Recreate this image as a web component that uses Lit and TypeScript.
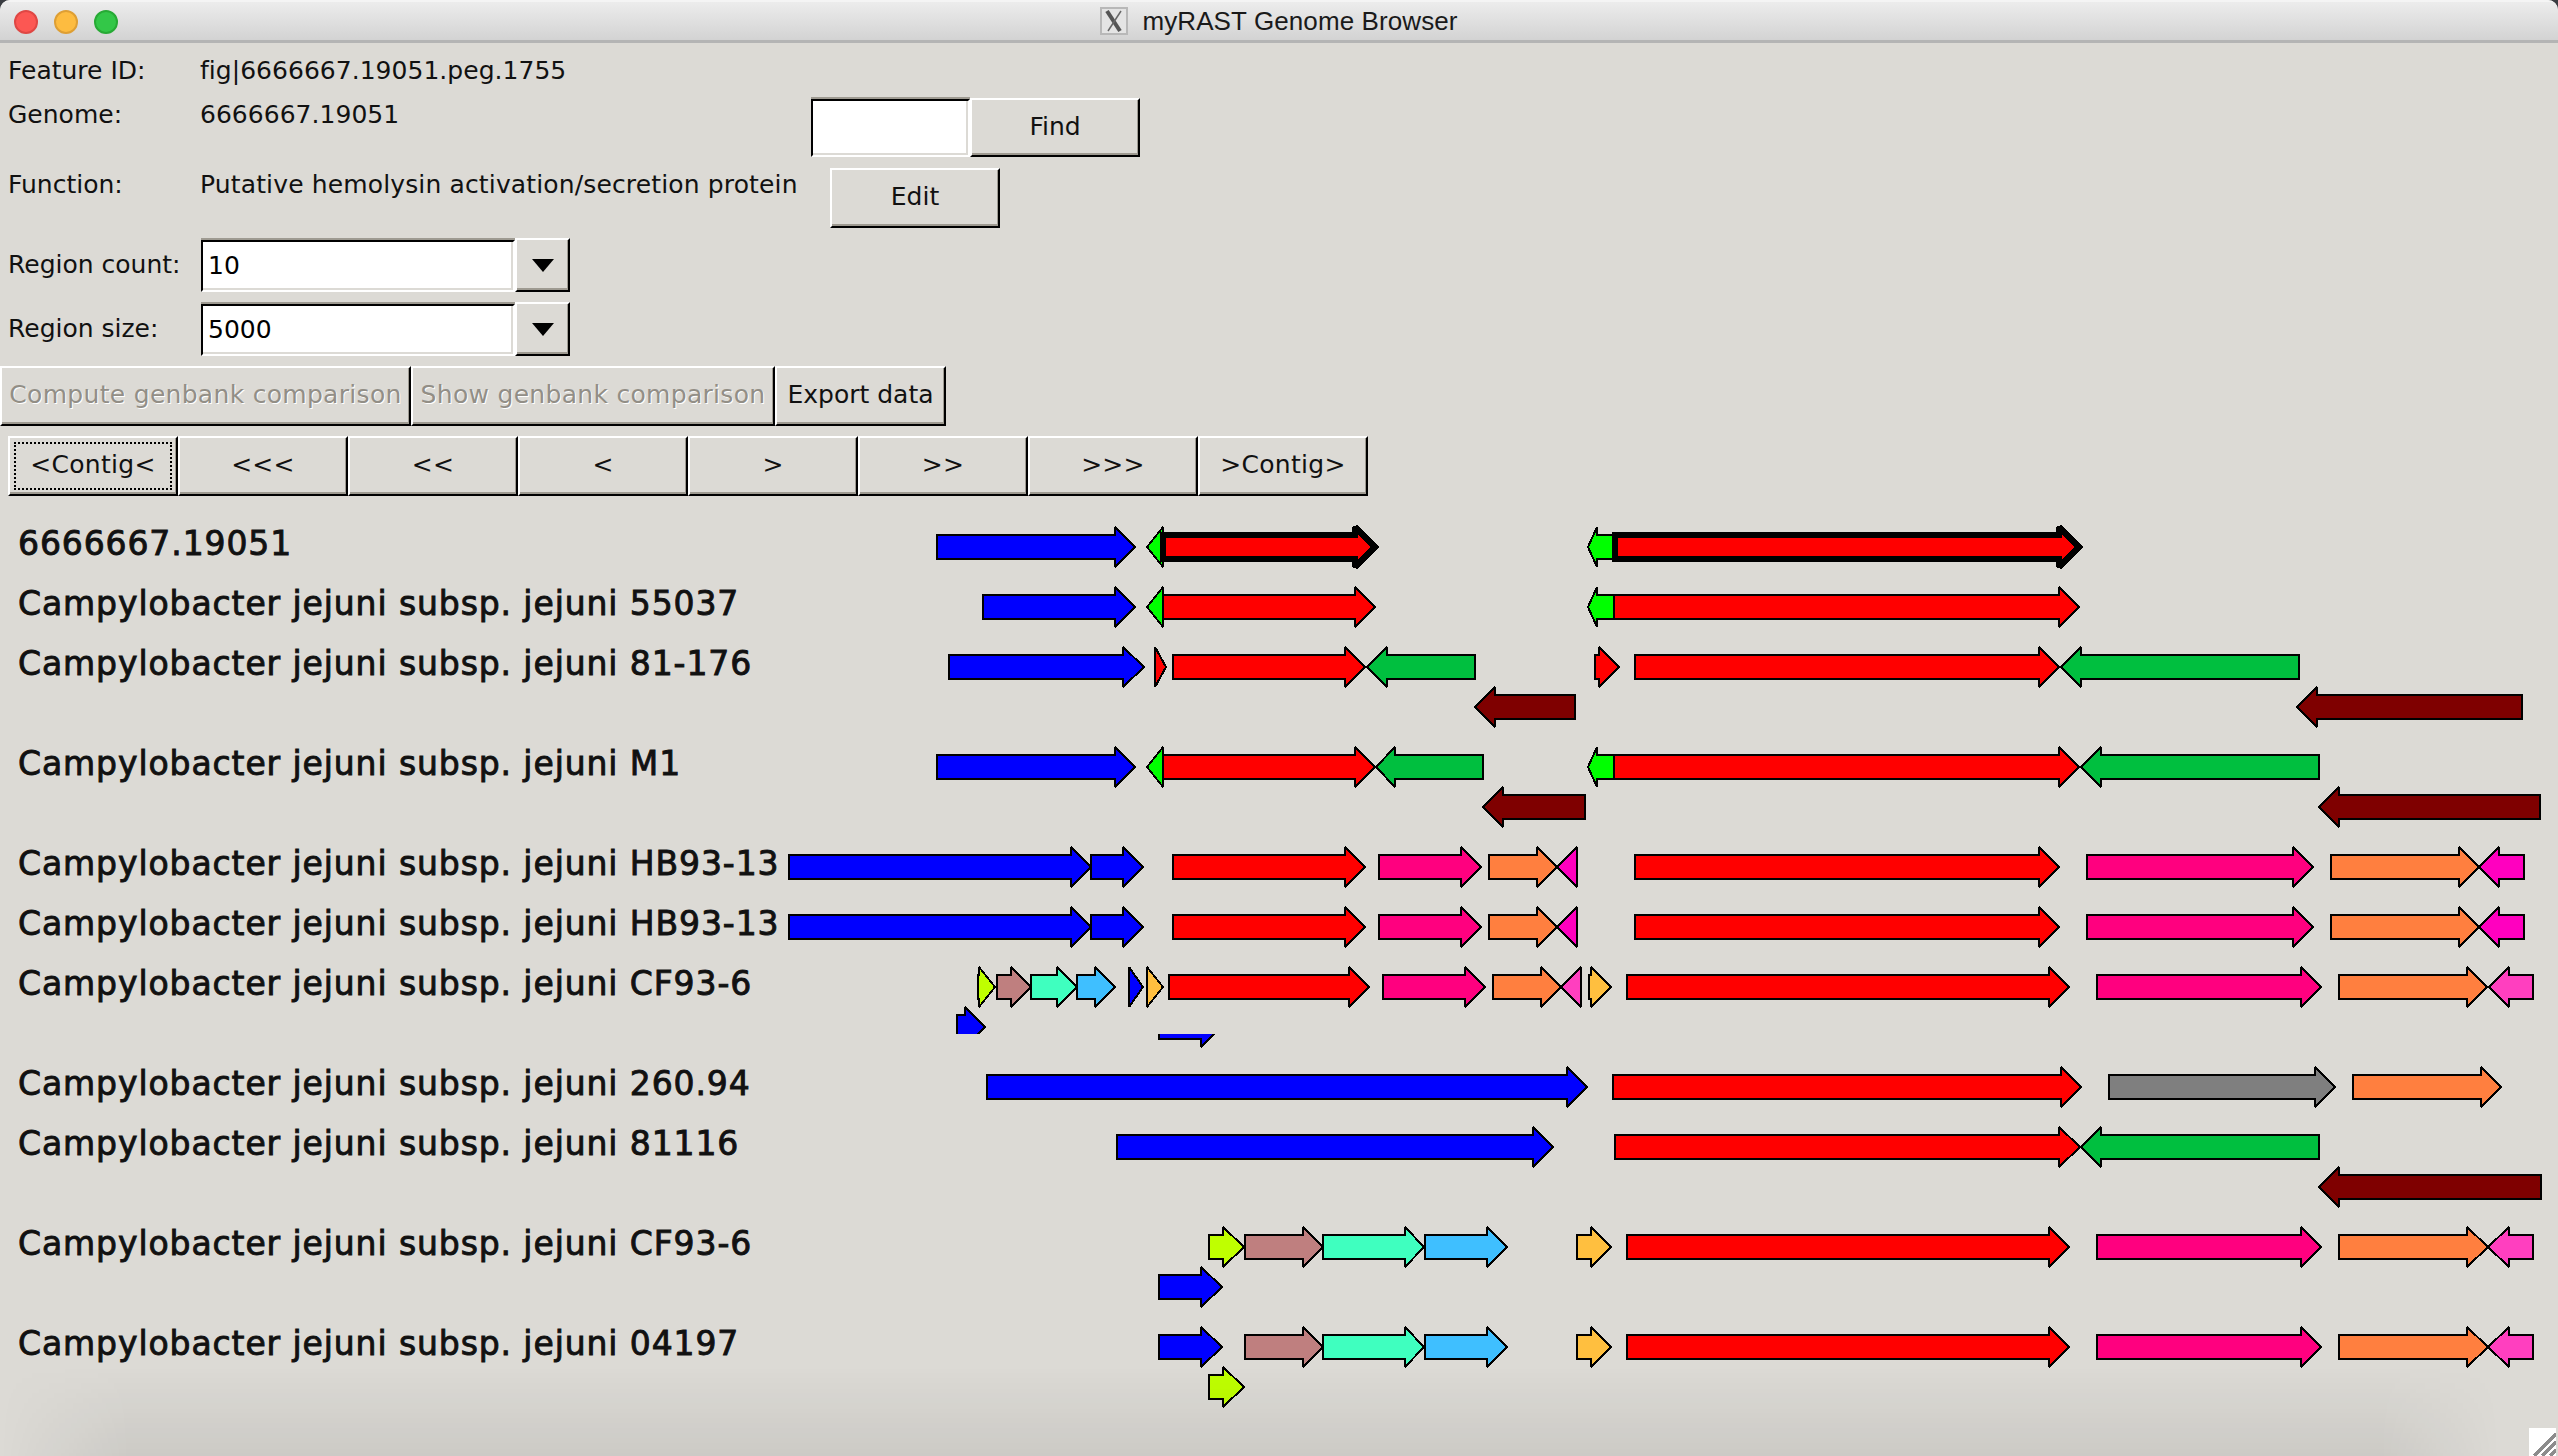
import { LitElement, html, svg, css, TemplateResult } from "lit";
import { customElement } from "lit/decorators.js";

const BLUE = "#0000ff";
const RED = "#ff0000";
const LIME = "#00ff00";
const GREEN = "#00bf3f";
const MAROON = "#7f0000";
const PINK = "#ff007f";
const ORANGE = "#ff7f3f";
const MAGENTA = "#ff00bf";
const ROSE = "#ff3fbf";
const GOLD = "#ffbf3f";
const YELLOW = "#bfff00";
const BROWN = "#bf7f7f";
const AQUA = "#3fffbf";
const SKY = "#3fbfff";
const GRAY = "#7f7f7f";

// [center y, tail x, head base x, tip x, colour, stroke width?, clip?]
// tip < tail means the gene points left
type Gene = [number, number, number, number, string, number?, string?];

const GENES: Gene[] = [
  [547, 937, 1115, 1135, BLUE],
  [547, 1163, 1163, 1147, LIME],
  [547, 1163, 1355, 1375, RED, 6],
  [547, 1614, 1597, 1588, LIME],
  [547, 1615, 2059, 2079, RED, 6],

  [607, 983, 1115, 1135, BLUE],
  [607, 1163, 1163, 1147, LIME],
  [607, 1163, 1355, 1375, RED],
  [607, 1614, 1597, 1588, LIME],
  [607, 1614, 2059, 2079, RED],

  [667, 949, 1123, 1144, BLUE],
  [667, 1155, 1155, 1166, RED],
  [667, 1173, 1345, 1365, RED],
  [667, 1475, 1387, 1367, GREEN],
  [667, 1595, 1599, 1619, RED],
  [667, 1635, 2039, 2059, RED],
  [667, 2299, 2081, 2061, GREEN],
  [707, 1575, 1495, 1475, MAROON],
  [707, 2522, 2317, 2297, MAROON],

  [767, 937, 1115, 1135, BLUE],
  [767, 1163, 1163, 1147, LIME],
  [767, 1163, 1355, 1375, RED],
  [767, 1483, 1395, 1376, GREEN],
  [767, 1614, 1597, 1588, LIME],
  [767, 1614, 2059, 2079, RED],
  [767, 2319, 2101, 2081, GREEN],
  [807, 1585, 1503, 1483, MAROON],
  [807, 2540, 2339, 2319, MAROON],

  ...[867, 927].flatMap((y): Gene[] => [
    [y, 789, 1071, 1091, BLUE],
    [y, 1091, 1123, 1143, BLUE],
    [y, 1173, 1345, 1365, RED],
    [y, 1379, 1461, 1481, PINK],
    [y, 1489, 1537, 1557, ORANGE],
    [y, 1577, 1577, 1557, MAGENTA],
    [y, 1635, 2039, 2059, RED],
    [y, 2087, 2293, 2313, PINK],
    [y, 2331, 2459, 2479, ORANGE],
    [y, 2524, 2499, 2479, MAGENTA],
  ]),

  [987, 978, 979, 995, YELLOW],
  [987, 997, 1011, 1031, BROWN],
  [987, 1031, 1057, 1077, AQUA],
  [987, 1077, 1095, 1115, SKY],
  [987, 1129, 1129, 1143, BLUE],
  [987, 1147, 1147, 1163, GOLD],
  [987, 1169, 1349, 1369, RED],
  [987, 1383, 1465, 1485, PINK],
  [987, 1493, 1541, 1561, ORANGE],
  [987, 1581, 1581, 1561, ROSE],
  [987, 1589, 1591, 1611, GOLD],
  [987, 1627, 2049, 2069, RED],
  [987, 2097, 2301, 2321, PINK],
  [987, 2339, 2467, 2487, ORANGE],
  [987, 2533, 2509, 2489, ROSE],
  [1027, 957, 965, 985, BLUE, 2, "above"],
  [1027, 1159, 1201, 1221, BLUE, 2, "below"],

  [1087, 987, 1567, 1587, BLUE],
  [1087, 1613, 2061, 2081, RED],
  [1087, 2109, 2315, 2335, GRAY],
  [1087, 2353, 2481, 2501, ORANGE],

  [1147, 1117, 1533, 1553, BLUE],
  [1147, 1615, 2059, 2080, RED],
  [1147, 2319, 2101, 2081, GREEN],
  [1187, 2541, 2339, 2319, MAROON],

  ...[1247, 1347].flatMap((y): Gene[] => [
    [y, 1245, 1303, 1323, BROWN],
    [y, 1323, 1405, 1424, AQUA],
    [y, 1425, 1487, 1507, SKY],
    [y, 1577, 1591, 1611, GOLD],
    [y, 1627, 2049, 2069, RED],
    [y, 2097, 2301, 2321, PINK],
    [y, 2339, 2467, 2488, ORANGE],
    [y, 2533, 2509, 2488, ROSE],
  ]),
  [1247, 1209, 1223, 1244, YELLOW],
  [1287, 1159, 1201, 1222, BLUE],
  [1347, 1159, 1201, 1222, BLUE],
  [1387, 1209, 1223, 1244, YELLOW],
];

const LABELS: [number, string][] = [
  [547, "6666667.19051"],
  [607, "Campylobacter jejuni subsp. jejuni 55037"],
  [667, "Campylobacter jejuni subsp. jejuni 81-176"],
  [767, "Campylobacter jejuni subsp. jejuni M1"],
  [867, "Campylobacter jejuni subsp. jejuni HB93-13"],
  [927, "Campylobacter jejuni subsp. jejuni HB93-13"],
  [987, "Campylobacter jejuni subsp. jejuni CF93-6"],
  [1087, "Campylobacter jejuni subsp. jejuni 260.94"],
  [1147, "Campylobacter jejuni subsp. jejuni 81116"],
  [1247, "Campylobacter jejuni subsp. jejuni CF93-6"],
  [1347, "Campylobacter jejuni subsp. jejuni 04197"],
];

const NAV = ["<Contig<", "<<<", "<<", "<", ">", ">>", ">>>", ">Contig>"];

function genePoints(y: number, tail: number, base: number, tip: number): string {
  return [
    [tail, y - 12],
    [base, y - 12],
    [base, y - 20],
    [tip, y],
    [base, y + 20],
    [base, y + 12],
    [tail, y + 12],
  ]
    .map((c) => c.join(","))
    .join(" ");
}

@customElement("app-root")
export class AppRoot extends LitElement {
  private combo(value: string): TemplateResult {
    return html`
      <div class="entry combo-entry">${value}</div>
      <div class="btn drop">
        <svg width="22" height="13" viewBox="0 0 22 13">
          <polygon points="0,0 22,0 11,13" fill="#000"></polygon>
        </svg>
      </div>
    `;
  }

  private canvas(): TemplateResult {
    return html`
      <svg class="canvas" width="2558" height="960" viewBox="0 496 2558 960">
        <defs>
          <clipPath id="above"><rect x="900" y="980" width="200" height="54"></rect></clipPath>
          <clipPath id="below"><rect x="1100" y="1034" width="200" height="40"></rect></clipPath>
        </defs>
        ${LABELS.map(
          ([y, text]) => svg`<text class="label" x="18" y=${y + 8}>${text}</text>`
        )}
        ${GENES.map(
          ([y, tail, base, tip, color, width, clip]) => svg`
            <polygon
              points=${genePoints(y, tail, base, tip)}
              fill=${color}
              stroke="#000"
              stroke-width=${width ?? 2}
              stroke-miterlimit="2.4"
              shape-rendering="crispEdges"
              clip-path=${clip ? `url(#${clip})` : "none"}
            ></polygon>`
        )}
      </svg>
    `;
  }

  public render(): TemplateResult {
    return html`
      <div class="window">
        <header class="titlebar">
          <div class="lights">
            <span class="light close"></span>
            <span class="light min"></span>
            <span class="light max"></span>
          </div>
          <div class="title">
            <svg width="28" height="28" viewBox="0 0 28 28">
              <rect x="1" y="1" width="26" height="26" fill="#e4e4e4" stroke="#b8b8b8" stroke-width="2"></rect>
              <path d="M7 4 L20 24" stroke="#555" stroke-width="4" fill="none"></path>
              <path d="M21 4 L8 24" stroke="#666" stroke-width="1.5" fill="none"></path>
            </svg>
            <span>myRAST Genome Browser</span>
          </div>
        </header>

        <div class="row row-feature">
          <span class="key">Feature ID:</span>
          <span class="value">fig|6666667.19051.peg.1755</span>
        </div>
        <div class="row row-genome">
          <span class="key">Genome:</span>
          <span class="value genome-value">6666667.19051</span>
          <div class="entry find-entry"></div>
          <div class="btn find">Find</div>
        </div>
        <div class="row row-function">
          <span class="key">Function:</span>
          <span class="value function-value">Putative hemolysin activation/secretion protein</span>
          <div class="btn edit">Edit</div>
        </div>
        <div class="row row-combo">
          <span class="key">Region count:</span>
          ${this.combo("10")}
        </div>
        <div class="row row-combo">
          <span class="key">Region size:</span>
          ${this.combo("5000")}
        </div>
        <div class="row row-actions">
          <div class="btn disabled compute">Compute genbank comparison</div>
          <div class="btn disabled show">Show genbank comparison</div>
          <div class="btn export">Export data</div>
        </div>
        <div class="row row-nav">
          ${NAV.map(
            (label, i) => html`<div class="btn nav ${i === 0 ? "focus" : ""}">${label}</div>`
          )}
        </div>

        ${this.canvas()}

        <div class="shade"></div>
        <svg class="grip" width="27" height="28" viewBox="0 0 27 28">
          <rect width="27" height="28" fill="#fff"></rect>
          <path d="M5 28 L27 6 M13 28 L27 14 M21 28 L27 22" stroke="#8c8c8c" stroke-width="3" shape-rendering="crispEdges"></path>
        </svg>
      </div>
    `;
  }

  static styles = css`
    :host {
      display: block;
      width: 2558px;
      height: 1456px;
      background: #3a3d42;
      overflow: hidden;
      font-family: "DejaVu Sans", sans-serif;
      font-size: 25px;
      line-height: 30px;
      color: #111;
    }

    .window {
      position: relative;
      display: flex;
      flex-direction: column;
      height: 1456px;
      background: #dcdad5;
      border-radius: 10px 10px 0 0;
      overflow: hidden;
    }

    .titlebar {
      position: relative;
      box-sizing: border-box;
      flex: none;
      height: 43px;
      display: flex;
      align-items: center;
      justify-content: center;
      background: linear-gradient(#ececec, #d3d3d3);
      border-top: 2px solid #f4f4f4;
      border-bottom: 3px solid #b4b4b4;
    }

    .lights {
      position: absolute;
      left: 14px;
      top: 8px;
      display: flex;
      gap: 16px;
    }

    .light {
      box-sizing: border-box;
      width: 24px;
      height: 24px;
      border-radius: 50%;
      border: 2px solid;
    }

    .close {
      background: #fc5753;
      border-color: #df4744;
    }

    .min {
      background: #fdbc40;
      border-color: #de9f34;
    }

    .max {
      background: #33c748;
      border-color: #27aa35;
    }

    .title {
      display: flex;
      align-items: center;
      gap: 14px;
      font-family: "Liberation Sans", Arial, sans-serif;
      font-size: 26px;
      letter-spacing: 0.1px;
      color: #1a1a1a;
    }

    .row {
      flex: none;
      display: flex;
      box-sizing: border-box;
      padding-left: 8px;
    }

    .key {
      width: 192px;
      flex: none;
    }

    .value {
      letter-spacing: 0.03px;
    }

    .row-feature {
      height: 55px;
      padding-top: 13px;
    }

    .row-genome {
      height: 59px;
    }

    .genome-value {
      width: 611px;
      padding-top: 2px;
    }

    .row-genome .key {
      padding-top: 2px;
    }

    .row-function {
      margin-top: 11px;
      height: 60px;
      padding-top: 2px;
    }

    .function-value {
      width: 630px;
      letter-spacing: 0.14px;
    }

    .row-combo {
      margin-top: 10px;
      height: 54px;
      align-items: center;
    }

    .row-actions {
      margin-top: 10px;
      height: 60px;
      padding-left: 0;
    }

    .row-nav {
      margin-top: 10px;
      height: 60px;
    }

    .btn {
      box-sizing: border-box;
      display: flex;
      align-items: center;
      justify-content: center;
      padding-bottom: 2px;
      background: #dcdad5;
      border: 2px solid;
      border-color: #fff #000 #000 #fff;
      box-shadow: inset -1px -2px 0 #9e9a91;
      white-space: nowrap;
    }

    .disabled {
      color: #928e86;
      letter-spacing: 0.3px;
      text-shadow: 1px 1px 0 #fff;
    }

    .find {
      width: 170px;
      height: 59px;
    }

    .edit {
      width: 170px;
      height: 60px;
      margin-top: -2px;
    }

    .compute {
      width: 411px;
    }

    .show {
      width: 364px;
    }

    .export {
      width: 171px;
    }

    .nav {
      width: 170px;
      height: 60px;
      letter-spacing: 0.3px;
    }

    .focus {
      outline: 2px dotted #000;
      outline-offset: -8px;
    }

    .drop {
      width: 55px;
      height: 54px;
      padding-bottom: 0;
    }

    .entry {
      box-sizing: border-box;
      background: #fff;
      border: 2px solid;
      border-color: #000 #fff #fff #000;
      box-shadow: inset -2px -2px 0 #dcdad5, 0 -2px 0 #9e9a91;
      padding-left: 6px;
      color: #000;
    }

    .find-entry {
      width: 159px;
      height: 58px;
      margin-top: 1px;
    }

    .combo-entry {
      width: 314px;
      height: 52px;
      margin-top: 2px;
      margin-left: 1px;
      padding-left: 5px;
      line-height: 48px;
    }

    .canvas {
      display: block;
      flex: none;
    }

    .label {
      font-family: "DejaVu Sans", sans-serif;
      font-size: 33px;
      letter-spacing: 0.9px;
      fill: #111;
      stroke: #111;
      stroke-width: 0.9px;
    }

    .shade {
      position: absolute;
      left: 0;
      right: 0;
      bottom: 0;
      height: 90px;
      background: linear-gradient(rgba(0, 0, 0, 0), rgba(0, 0, 0, 0.07));
      -webkit-mask-image: linear-gradient(90deg, transparent 0, #000 130px, #000 2380px, transparent 2500px);
      mask-image: linear-gradient(90deg, transparent 0, #000 130px, #000 2380px, transparent 2500px);
      pointer-events: none;
    }

    .grip {
      position: absolute;
      right: 2px;
      bottom: 0;
    }
  `;
}
